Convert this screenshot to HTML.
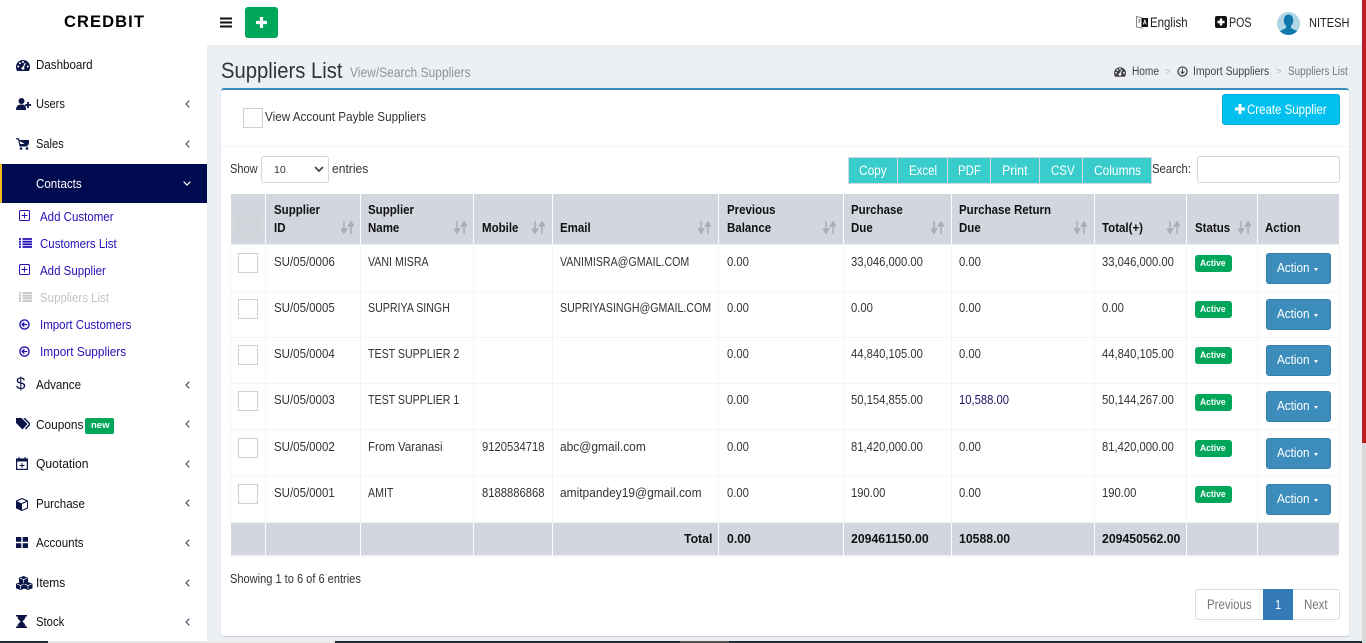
<!DOCTYPE html>
<html><head><meta charset="utf-8"><title>Suppliers List</title>
<style>
html,body{margin:0;padding:0;width:1366px;height:643px;overflow:hidden;background:#ecf0f5}
body{position:relative;font-family:"Liberation Sans",sans-serif;color:#333}
span,div,svg{position:absolute}
span{white-space:nowrap;font-size:12.5px;line-height:16px;transform:scaleX(.85);transform-origin:0 50%}
span.b{font-weight:700;color:#111;transform:scaleX(.92)}
span.tt{transform:scaleX(.98)}
span.side{color:#111;font-size:13px;transform:scaleX(.89)}
span.sub{color:#2311b5;font-size:13px;transform:scaleX(.885)}
span.i{transform:scaleX(.92)}
span.n{transform:scaleX(.9)}
span.m{transform:scaleX(.955)}
.tb{background:#39cccc;color:#fff;height:27px;top:157px;border:1px solid #d4d8dd;box-sizing:border-box}
.cb{width:20px;height:20px;box-sizing:border-box;border:1px solid #d2d0c8;background:#fff}
.g{background:#d2d6de}
.v{background:#f4f4f4;width:1px;top:245px;height:278px}
.vw{background:#fff;width:1px}
.h{background:#f4f4f4;height:1px;left:231px;width:1108px}
.bd{left:1195px;width:37px;height:17px;background:#00a65a;border-radius:3px}
.bd span{left:5px;top:1px;color:#fff;font-weight:700;font-size:9.5px;transform:scaleX(.9)}
.ac{left:1266px;width:65px;height:31px;background:#3c8dbc;border:1px solid #367fa9;box-sizing:border-box;border-radius:3px}
.ac span{left:10px;top:6px;color:#fff;font-size:13px;transform:scaleX(.9)}
.ac i{position:absolute;left:47px;top:14px;border:2.5px solid transparent;border-top:3px solid #fff;border-bottom:0}
.ch{left:185px;width:5px;height:8px}
</style></head><body>
<svg width="0" height="0" style="position:absolute"><defs>
<symbol id="s" viewBox="0 0 13 13"><path d="M3 0v10M0.5 8L3 12 5.5 8zM10 13V3M7.5 5L10 1l2.5 4z" fill="#aaaeb6" stroke="#aaaeb6" stroke-width="1.6"/></symbol>
<symbol id="c" viewBox="0 0 5 8"><path d="M4.300.7L1 4l3.300 3.300" fill="none" stroke="#3b4a5c" stroke-width="1.100"/></symbol>
<symbol id="pl" viewBox="0 0 13 13"><rect x=".6" y=".6" width="11.8" height="11.8" rx="1.5" fill="none" stroke="#2311b5" stroke-width="1.2"/><path d="M6.5 3v7M3 6.5h7" stroke="#2311b5" stroke-width="1.1"/></symbol>
<symbol id="li" viewBox="0 0 13 10"><path d="M0 1h2M3.5 1H13M0 3.7h2M3.5 3.7H13M0 6.3h2M3.5 6.3H13M0 9h2M3.5 9H13" stroke="currentColor" stroke-width="1.8"/></symbol>
<symbol id="im" viewBox="0 0 12 12"><circle cx="6" cy="6" r="5" fill="none" stroke="#2311b5" stroke-width="1.5"/><path d="M9 6H3.5M5.8 3.6L3.4 6l2.4 2.400" fill="none" stroke="#2311b5" stroke-width="1.4"/></symbol>
<symbol id="da" viewBox="0 0 14 11"><path d="M7 0a7 7 0 0 0-7 7c0 1.500.4 2.800 1.200 4h11.600c.8-1.200 1.200-2.500 1.200-4a7 7 0 0 0-7-7z" fill="currentColor"/><circle cx="4" cy="3.200" r="1" fill="#fff"/><circle cx="2.300" cy="6.500" r="1" fill="#fff"/><circle cx="11.700" cy="6.500" r="1" fill="#fff"/><circle cx="7" cy="2" r="1" fill="#fff"/><circle cx="7" cy="8.200" r="1.500" fill="#fff"/><path d="M7 8l2.300-5" stroke="#fff" stroke-width="1.100"/></symbol>
<symbol id="cu" viewBox="0 0 9 8"><path d="M4.500 0L9 1.700v4.600L4.500 8 0 6.300V1.700z" fill="#0b1446"/><path d="M1 2.200l3.500 1.300L8 2.200M4.500 3.500V7" fill="none" stroke="#fff" stroke-width=".7"/></symbol>
</defs></svg>

<!-- top bar -->
<div style="left:0;top:0;width:1366px;height:45px;background:#fff"></div>
<span style="left:64px;top:12px;font-size:16.500px;line-height:20px;font-weight:700;color:#000;letter-spacing:1.100px;transform:none">CREDBIT</span>
<svg style="left:220px;top:17px" width="12" height="11"><path d="M0 1.500h12M0 5.500h12M0 9.500h12" stroke="#111" stroke-width="2"/></svg>
<div style="left:245px;top:7px;width:33px;height:31px;background:#00a65a;border-radius:3px"></div>
<svg style="left:256px;top:17px" width="11" height="11"><path d="M5.500 0v11M0 5.500h11" stroke="#fff" stroke-width="3.200"/></svg>
<svg style="left:1136px;top:16px" width="13" height="13"><path d="M.5.500L6 2v10L.5 11z" fill="#fff" stroke="#888"/><rect x="5.500" y="2" width="6.500" height="9" fill="#111"/><path d="M7.300 8.500l1.500-4.500 1.500 4.500M7.800 7h2" stroke="#fff" stroke-width=".8" fill="none"/><path d="M2 4h2.500M3.200 3v1M2.300 7l2-2.500" stroke="#666" stroke-width=".7"/></svg>
<span style="left:1150px;top:15px;font-size:13.500px;color:#222">English</span>
<svg style="left:1215px;top:16px" width="12" height="12"><rect width="12" height="12" rx="2" fill="#111"/><path d="M6 2.500v7M2.500 6h7" stroke="#fff" stroke-width="2.400"/></svg>
<span style="left:1229px;top:15px;font-size:13.500px;color:#222;transform:scaleX(.79)">POS</span>
<svg style="left:1277px;top:12px" width="23" height="23"><defs><clipPath id="k"><circle cx="11.500" cy="11.500" r="11.500"/></clipPath></defs><circle cx="11.500" cy="11.500" r="11.500" fill="#b0d6e6"/><g clip-path="url(#k)" fill="#0f79ad"><ellipse cx="11.500" cy="8.500" rx="4.800" ry="6"/><path d="M9 13h5v3l6 3v4H3v-4l6-3z"/></g></svg>
<span style="left:1309px;top:15px;font-size:13px;color:#222">NITESH</span>

<!-- sidebar -->
<div style="left:0;top:45px;width:207px;height:596px;background:#fff"></div>
<div style="left:0;top:164px;width:207px;height:39px;background:#000b4f"></div>
<div style="left:0;top:164px;width:2px;height:39px;background:#f3b61f"></div>

<svg style="left:16px;top:60px;color:#0b1446" width="14" height="11"><use href="#da"/></svg>
<span class="side" style="left:36px;top:57px">Dashboard</span>
<svg style="left:16px;top:98px" width="15" height="12"><circle cx="5.500" cy="3" r="3" fill="#0b1446"/><path d="M0 12c0-4 2-5.500 5.500-5.500S10 8 10 12z" fill="#0b1446"/><path d="M12 4v6M9 7h6" stroke="#0b1446" stroke-width="1.800"/></svg>
<span class="side" style="left:36px;top:96px;transform:scaleX(.85)">Users</span>
<svg class="ch" style="top:100px"><use href="#c"/></svg>
<svg style="left:16px;top:138px" width="13" height="12"><path d="M0 .8h2.500L4 8h8M3 2.500h10L12 6.500H3.800z" fill="#0b1446" stroke="#0b1446"/><circle cx="5" cy="10.500" r="1.300" fill="#0b1446"/><circle cx="11" cy="10.500" r="1.300" fill="#0b1446"/></svg>
<span class="side" style="left:36px;top:136px;transform:scaleX(.85)">Sales</span>
<svg class="ch" style="top:140px"><use href="#c"/></svg>
<span class="side" style="left:36px;top:176px;color:#fff">Contacts</span>
<svg style="left:183px;top:181px" width="8" height="5"><path d="M.7.700L4 4 7.300.700" fill="none" stroke="#fff" stroke-width="1.200"/></svg>

<svg style="left:19px;top:210px" width="11" height="11"><use href="#pl"/></svg>
<span class="sub" style="left:40px;top:209px">Add Customer</span>
<svg style="left:19px;top:238px;color:#2311b5" width="13" height="10"><use href="#li"/></svg>
<span class="sub" style="left:40px;top:236px">Customers List</span>
<svg style="left:19px;top:264px" width="11" height="11"><use href="#pl"/></svg>
<span class="sub" style="left:40px;top:263px">Add Supplier</span>
<svg style="left:19px;top:292px;color:#c4c4c4" width="13" height="10"><use href="#li"/></svg>
<span class="sub" style="left:40px;top:290px;color:#c4c4c4">Suppliers List</span>
<svg style="left:19px;top:319px" width="11" height="11"><use href="#im"/></svg>
<span class="sub" style="left:40px;top:317px">Import Customers</span>
<svg style="left:19px;top:346px" width="11" height="11"><use href="#im"/></svg>
<span class="sub" style="left:40px;top:344px;transform:scaleX(.91)">Import Suppliers</span>

<span style="left:16px;top:376px;font-size:17px;color:#0b1446;transform:none">$</span>
<span class="side" style="left:36px;top:377px">Advance</span>
<svg class="ch" style="top:381px"><use href="#c"/></svg>
<svg style="left:16px;top:418px" width="14" height="12"><path d="M0 0h5.500l6 6-5 5.500L0 5z" fill="#0b1446"/><path d="M8 0l6 6-4.500 5" fill="none" stroke="#0b1446" stroke-width="1.500"/></svg>
<span class="side" style="left:36px;top:417px;transform:scaleX(.91)">Coupons</span>
<div style="left:85px;top:418px;width:29px;height:16px;background:#00a65a;border-radius:2px"></div>
<span style="left:91px;top:418px;color:#fff;font-weight:700;font-size:9.500px;transform:none">new</span>
<svg class="ch" style="top:420px"><use href="#c"/></svg>
<svg style="left:16px;top:457px" width="12" height="13"><rect x=".6" y="2" width="10.800" height="10.400" fill="#fff" stroke="#0b1446" stroke-width="1.200"/><path d="M0 2h12v2H0zM3 0v2M9 0v2" stroke="#0b1446" fill="#0b1446"/><path d="M6 6v5M3.500 8.500h5" stroke="#0b1446"/></svg>
<span class="side" style="left:36px;top:456px;transform:scaleX(.93)">Quotation</span>
<svg class="ch" style="top:460px"><use href="#c"/></svg>
<svg style="left:16px;top:498px" width="12" height="13"><path d="M6 .5L11.500 3v7L6 12.500.5 10V3z" fill="#fff" stroke="#0b1446"/><path d="M.5 3L6 5.500v7L.5 10z" fill="#0b1446"/><path d="M6 5.500L11.500 3" stroke="#0b1446"/></svg>
<span class="side" style="left:36px;top:496px">Purchase</span>
<svg class="ch" style="top:499px"><use href="#c"/></svg>
<svg style="left:16px;top:537px" width="12" height="11"><path d="M0 0h5.300v4.800H0zM6.700 0H12v4.800H6.700zM0 6.200h5.300V11H0zM6.700 6.200H12V11H6.700z" fill="#0b1446"/></svg>
<span class="side" style="left:36px;top:535px">Accounts</span>
<svg class="ch" style="top:539px"><use href="#c"/></svg>
<svg style="left:16px;top:576px" width="9" height="8" overflow="visible"><use href="#cu" x="3" y="0" width="9" height="8"/><use href="#cu" x="0" y="6" width="9" height="8"/><use href="#cu" x="7.500" y="6" width="9" height="8"/></svg>
<span class="side" style="left:36px;top:575px;transform:scaleX(.92)">Items</span>
<svg class="ch" style="top:579px"><use href="#c"/></svg>
<svg style="left:16px;top:615px" width="11" height="13"><path d="M0 0h11v1.500H9.500C9.500 4.500 7 5.500 6.500 6.500c.5 1 3 2 3 5H11V13H0v-1.500h1.500c0-3 2.500-4 3-5-.5-1-3-2-3-5H0z" fill="#0b1446"/></svg>
<span class="side" style="left:36px;top:614px;transform:scaleX(.87)">Stock</span>
<svg class="ch" style="top:618px"><use href="#c"/></svg>

<!-- content header -->
<span style="left:221px;top:58px;font-size:22px;line-height:26px;color:#333;transform:scaleX(.92)">Suppliers List</span>
<span style="left:350px;top:65px;font-size:13.500px;color:#8e949b;transform:scaleX(.89)">View/Search Suppliers</span>
<svg style="left:1114px;top:67px;color:#444" width="12" height="10"><use href="#da"/></svg>
<span style="left:1132px;top:64px;font-size:11.500px;color:#444;transform:scaleX(.88)">Home</span>
<span style="left:1165px;top:64px;font-size:11px;color:#bbb">&gt;</span>
<svg style="left:1177px;top:66px" width="11" height="11"><circle cx="5.500" cy="5.500" r="4.500" fill="none" stroke="#444" stroke-width="1.300"/><path d="M5.500 2.500v5M3.500 5.500l2 2 2-2" fill="none" stroke="#444"/></svg>
<span style="left:1193px;top:64px;font-size:11.500px;color:#444;transform:scaleX(.91)">Import Suppliers</span>
<span style="left:1276px;top:64px;font-size:11px;color:#bbb">&gt;</span>
<span style="left:1288px;top:64px;font-size:11.500px;color:#777;transform:scaleX(.865)">Suppliers List</span>

<!-- card -->
<div style="left:221px;top:88px;width:1128px;height:548px;background:#fff;border-top:2px solid #3c8dbc;box-sizing:border-box;border-radius:3px;box-shadow:0 1px 1px rgba(0,0,0,.15)"></div>
<div class="cb" style="left:243px;top:108px"></div>
<span style="left:265px;top:109px;font-size:13px;transform:scaleX(.9)">View Account Payble Suppliers</span>
<div style="left:1222px;top:94px;width:118px;height:31px;background:#00c0ef;border-radius:3px;border:1px solid #00acd6;box-sizing:border-box"></div>
<svg style="left:1235px;top:104px" width="10" height="10"><path d="M5 0v10M0 5h10" stroke="#fff" stroke-width="3"/></svg>
<span style="left:1247px;top:102px;font-size:13.500px;color:#fff">Create Supplier</span>
<div style="left:221px;top:146px;width:1128px;height:1px;background:#f4f4f4"></div>

<span style="left:230px;top:161px;font-size:13px">Show</span>
<div style="left:261px;top:156px;width:68px;height:27px;border:1px solid #d2d6de;box-sizing:border-box;border-radius:3px;background:#fff"></div>
<span style="left:274px;top:162px;transform:none;font-size:10.500px">10</span>
<svg style="left:314px;top:166px" width="10" height="7"><path d="M1 1l4 4 4-4" fill="none" stroke="#444" stroke-width="1.800"/></svg>
<span style="left:332px;top:161px;font-size:13px;transform:scaleX(.93)">entries</span>

<div class="tb" style="left:848px;width:50px"></div><span style="left:859px;top:163px;color:#fff;font-size:13.500px;transform:scaleX(.88)">Copy</span>
<div class="tb" style="left:897px;width:51px"></div><span style="left:909px;top:163px;color:#fff;font-size:13.500px">Excel</span>
<div class="tb" style="left:947px;width:44px"></div><span style="left:958px;top:163px;color:#fff;font-size:13.500px">PDF</span>
<div class="tb" style="left:990px;width:50px"></div><span style="left:1002px;top:163px;color:#fff;font-size:13.500px;transform:scaleX(.92)">Print</span>
<div class="tb" style="left:1039px;width:44px"></div><span style="left:1051px;top:163px;color:#fff;font-size:13.500px">CSV</span>
<div class="tb" style="left:1082px;width:70px"></div><span style="left:1094px;top:163px;color:#fff;font-size:13.500px;transform:scaleX(.885)">Columns</span>
<span style="left:1152px;top:161px;font-size:13px;transform:scaleX(.87)">Search:</span>
<div style="left:1197px;top:156px;width:143px;height:27px;border:1px solid #d2d6de;box-sizing:border-box;border-radius:3px;background:#fff"></div>

<!-- table -->
<div class="g" style="left:231px;top:194px;width:1108px;height:50px"></div>
<div class="g" style="left:231px;top:523px;width:1108px;height:32px"></div>
<div style="left:231px;top:244px;width:1108px;height:1px;background:#eee"></div>
<div style="left:231px;top:555px;width:1108px;height:2px;background:#f4f4f4"></div>
<div class="h" style="top:291px"></div><div class="h" style="top:337px"></div><div class="h" style="top:383px"></div><div class="h" style="top:429px"></div><div class="h" style="top:476px"></div><div class="h" style="top:522px"></div>
<div class="v" style="left:230px"></div><div class="v" style="left:265px"></div><div class="v" style="left:360px"></div><div class="v" style="left:473px"></div><div class="v" style="left:552px"></div><div class="v" style="left:718px"></div><div class="v" style="left:843px"></div><div class="v" style="left:951px"></div><div class="v" style="left:1094px"></div><div class="v" style="left:1186px"></div><div class="v" style="left:1257px"></div><div class="v" style="left:1339px"></div>
<div class="vw" style="left:265px;top:194px;height:50px"></div><div class="vw" style="left:360px;top:194px;height:50px"></div><div class="vw" style="left:473px;top:194px;height:50px"></div><div class="vw" style="left:552px;top:194px;height:50px"></div><div class="vw" style="left:718px;top:194px;height:50px"></div><div class="vw" style="left:843px;top:194px;height:50px"></div><div class="vw" style="left:951px;top:194px;height:50px"></div><div class="vw" style="left:1094px;top:194px;height:50px"></div><div class="vw" style="left:1186px;top:194px;height:50px"></div><div class="vw" style="left:1257px;top:194px;height:50px"></div>
<div class="vw" style="left:265px;top:523px;height:32px"></div><div class="vw" style="left:360px;top:523px;height:32px"></div><div class="vw" style="left:473px;top:523px;height:32px"></div><div class="vw" style="left:552px;top:523px;height:32px"></div><div class="vw" style="left:718px;top:523px;height:32px"></div><div class="vw" style="left:843px;top:523px;height:32px"></div><div class="vw" style="left:951px;top:523px;height:32px"></div><div class="vw" style="left:1094px;top:523px;height:32px"></div><div class="vw" style="left:1186px;top:523px;height:32px"></div><div class="vw" style="left:1257px;top:523px;height:32px"></div>

<div class="cb" style="left:238px;top:217px;background:#d2d6de"></div>
<span class="b" style="left:274px;top:202px">Supplier</span><span class="b" style="left:274px;top:220px">ID</span>
<span class="b" style="left:368px;top:202px">Supplier</span><span class="b" style="left:368px;top:220px">Name</span>
<span class="b" style="left:482px;top:220px">Mobile</span>
<span class="b" style="left:560px;top:220px">Email</span>
<span class="b" style="left:727px;top:202px">Previous</span><span class="b" style="left:727px;top:220px">Balance</span>
<span class="b" style="left:851px;top:202px">Purchase</span><span class="b" style="left:851px;top:220px">Due</span>
<span class="b" style="left:959px;top:202px">Purchase Return</span><span class="b" style="left:959px;top:220px">Due</span>
<span class="b" style="left:1102px;top:220px">Total(+)</span>
<span class="b" style="left:1195px;top:220px">Status</span>
<span class="b" style="left:1265px;top:220px">Action</span>
<svg style="left:341px;top:221px" width="13" height="13"><use href="#s"/></svg>
<svg style="left:454px;top:221px" width="13" height="13"><use href="#s"/></svg>
<svg style="left:532px;top:221px" width="13" height="13"><use href="#s"/></svg>
<svg style="left:698px;top:221px" width="13" height="13"><use href="#s"/></svg>
<svg style="left:823px;top:221px" width="13" height="13"><use href="#s"/></svg>
<svg style="left:931px;top:221px" width="13" height="13"><use href="#s"/></svg>
<svg style="left:1074px;top:221px" width="13" height="13"><use href="#s"/></svg>
<svg style="left:1167px;top:221px" width="13" height="13"><use href="#s"/></svg>
<svg style="left:1238px;top:221px" width="13" height="13"><use href="#s"/></svg>

<!-- row 1 -->
<div class="cb" style="left:238px;top:253px"></div>
<span class="i" style="left:274px;top:254px">SU/05/0006</span><span style="left:368px;top:254px">VANI MISRA</span><span style="left:560px;top:254px">VANIMISRA@GMAIL.COM</span><span class="n" style="left:727px;top:254px">0.00</span><span class="n" style="left:851px;top:254px">33,046,000.00</span><span class="n" style="left:959px;top:254px">0.00</span><span class="n" style="left:1102px;top:254px">33,046,000.00</span>
<div class="bd" style="top:255px"><span>Active</span></div><div class="ac" style="top:253px"><span>Action</span><i></i></div>
<!-- row 2 -->
<div class="cb" style="left:238px;top:299px"></div>
<span class="i" style="left:274px;top:300px">SU/05/0005</span><span style="left:368px;top:300px">SUPRIYA SINGH</span><span style="left:560px;top:300px">SUPRIYASINGH@GMAIL.COM</span><span class="n" style="left:727px;top:300px">0.00</span><span class="n" style="left:851px;top:300px">0.00</span><span class="n" style="left:959px;top:300px">0.00</span><span class="n" style="left:1102px;top:300px">0.00</span>
<div class="bd" style="top:301px"><span>Active</span></div><div class="ac" style="top:299px"><span>Action</span><i></i></div>
<!-- row 3 -->
<div class="cb" style="left:238px;top:345px"></div>
<span class="i" style="left:274px;top:346px">SU/05/0004</span><span style="left:368px;top:346px">TEST SUPPLIER 2</span><span class="n" style="left:727px;top:346px">0.00</span><span class="n" style="left:851px;top:346px">44,840,105.00</span><span class="n" style="left:959px;top:346px">0.00</span><span class="n" style="left:1102px;top:346px">44,840,105.00</span>
<div class="bd" style="top:347px"><span>Active</span></div><div class="ac" style="top:345px"><span>Action</span><i></i></div>
<!-- row 4 -->
<div class="cb" style="left:238px;top:391px"></div>
<span class="i" style="left:274px;top:392px">SU/05/0003</span><span style="left:368px;top:392px">TEST SUPPLIER 1</span><span class="n" style="left:727px;top:392px">0.00</span><span class="n" style="left:851px;top:392px">50,154,855.00</span><span class="n" style="left:959px;top:392px;color:#1a1566">10,588.00</span><span class="n" style="left:1102px;top:392px">50,144,267.00</span>
<div class="bd" style="top:394px"><span>Active</span></div><div class="ac" style="top:391px"><span>Action</span><i></i></div>
<!-- row 5 -->
<div class="cb" style="left:238px;top:438px"></div>
<span class="i" style="left:274px;top:439px">SU/05/0002</span><span class="i" style="left:368px;top:439px">From Varanasi</span><span class="n" style="left:482px;top:439px">9120534718</span><span class="m" style="left:560px;top:439px">abc@gmail.com</span><span class="n" style="left:727px;top:439px">0.00</span><span class="n" style="left:851px;top:439px">81,420,000.00</span><span class="n" style="left:959px;top:439px">0.00</span><span class="n" style="left:1102px;top:439px">81,420,000.00</span>
<div class="bd" style="top:440px"><span>Active</span></div><div class="ac" style="top:438px"><span>Action</span><i></i></div>
<!-- row 6 -->
<div class="cb" style="left:238px;top:484px"></div>
<span class="i" style="left:274px;top:485px">SU/05/0001</span><span style="left:368px;top:485px">AMIT</span><span class="n" style="left:482px;top:485px">8188886868</span><span class="m" style="left:560px;top:485px">amitpandey19@gmail.com</span><span class="n" style="left:727px;top:485px">0.00</span><span class="n" style="left:851px;top:485px">190.00</span><span class="n" style="left:959px;top:485px">0.00</span><span class="n" style="left:1102px;top:485px">190.00</span>
<div class="bd" style="top:486px"><span>Active</span></div><div class="ac" style="top:484px"><span>Action</span><i></i></div>
<!-- total -->
<span class="b tt" style="left:684px;top:531px">Total</span><span class="b tt" style="left:727px;top:531px">0.00</span><span class="b tt" style="left:851px;top:531px">209461150.00</span><span class="b tt" style="left:959px;top:531px">10588.00</span><span class="b tt" style="left:1102px;top:531px">209450562.00</span>

<span style="left:230px;top:571px;font-size:13px">Showing 1 to 6 of 6 entries</span>

<div style="left:1195px;top:589px;width:145px;height:31px;border:1px solid #ddd;box-sizing:border-box;border-radius:3px;background:#fff"></div>
<div style="left:1263px;top:589px;width:30px;height:31px;background:#337ab7"></div>
<span style="left:1207px;top:597px;font-size:13.500px;color:#777">Previous</span>
<span style="left:1275px;top:597px;font-size:13px;color:#fff;font-weight:400">1</span>
<span style="left:1304px;top:597px;font-size:13.500px;color:#777">Next</span>

<!-- scrollbar / bottom strip -->
<div style="left:1362px;top:0;width:4px;height:443px;background:#b82025"></div>
<div style="left:1362px;top:443px;width:4px;height:200px;background:#d8d8d8"></div>
<div style="left:0;top:641px;width:1362px;height:2px;background:#1f2d33"></div>
<div style="left:48px;top:641px;width:287px;height:2px;background:#e8e8e8"></div>
<div style="left:680px;top:641px;width:49px;height:2px;background:#555"></div>
</body></html>
